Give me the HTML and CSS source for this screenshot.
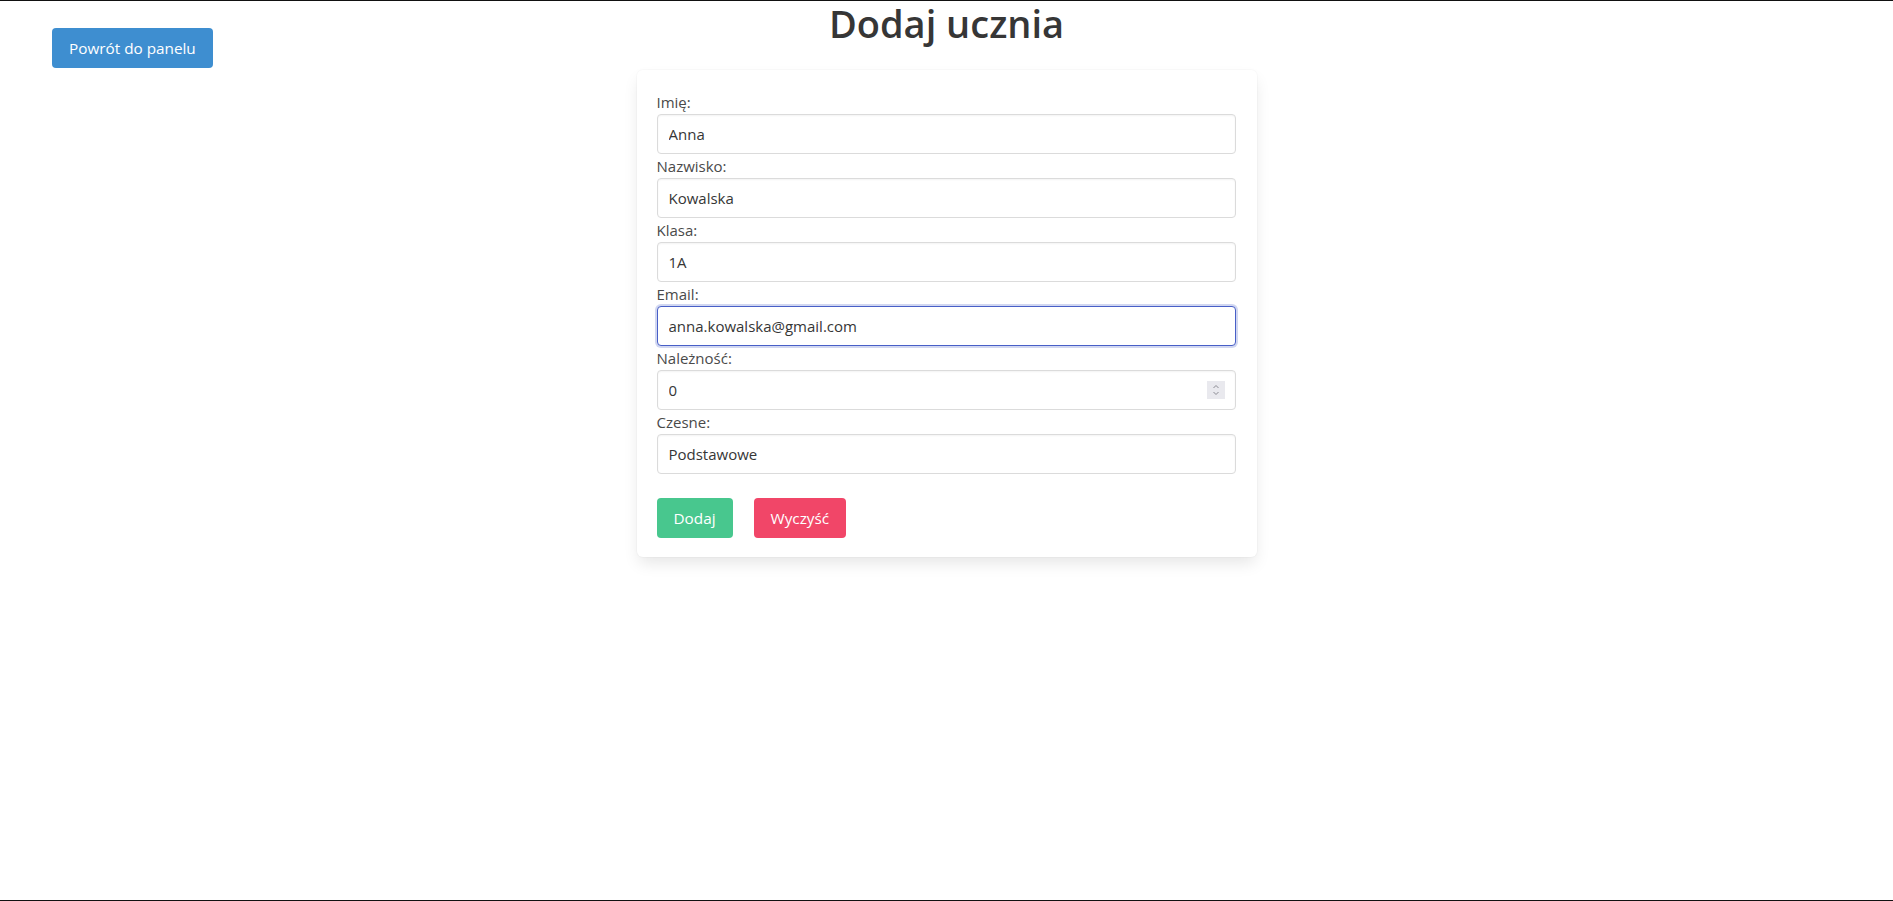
FILE: index.html
```html
<!DOCTYPE html>
<html lang="pl">
<head>
<meta charset="utf-8">
<title>Dodaj ucznia</title>
<link rel="stylesheet" href="styles.css">
</head>
<body>
<div class="page">
  <div class="side">
    <a class="btn btn-info back-btn" href="#">Powrót do panelu</a>
  </div>
  <main class="center">
    <h1 class="title">Dodaj ucznia</h1>
    <form class="box">
      <div class="field">
        <label class="label" for="imie">Imię:</label>
        <input class="input" id="imie" type="text" value="Anna">
      </div>
      <div class="field">
        <label class="label" for="nazwisko">Nazwisko:</label>
        <input class="input" id="nazwisko" type="text" value="Kowalska">
      </div>
      <div class="field">
        <label class="label" for="klasa">Klasa:</label>
        <input class="input" id="klasa" type="text" value="1A">
      </div>
      <div class="field">
        <label class="label" for="email">Email:</label>
        <input class="input is-focused" id="email" type="email" value="anna.kowalska@gmail.com">
      </div>
      <div class="field">
        <label class="label" for="naleznosc">Należność:</label>
        <div class="number-wrap">
          <input class="input input-number" id="naleznosc" type="number" value="0">
          <span class="spinner" aria-hidden="true">
            <svg width="18" height="18" viewBox="0 0 18 18">
              <rect width="18" height="18" fill="#e9e9ee"/>
              <path d="M6.5 7 L9 4.5 L11.5 7" fill="none" stroke="#8a8a92" stroke-width="1"/>
              <path d="M6.5 11 L9 13.5 L11.5 11" fill="none" stroke="#8a8a92" stroke-width="1"/>
            </svg>
          </span>
        </div>
      </div>
      <div class="field">
        <label class="label" for="czesne">Czesne:</label>
        <input class="input" id="czesne" type="text" value="Podstawowe">
      </div>
      <div class="actions">
        <button type="submit" class="btn btn-success">Dodaj</button>
        <button type="reset" class="btn btn-danger">Wyczyść</button>
      </div>
    </form>
  </main>
  <div class="side"></div>
</div>
</body>
</html>
```

FILE: styles.css
```css
* {
  box-sizing: border-box;
}

html {
  height: 100%;
}

body {
  margin: 0;
  min-height: 100vh;
  border-top: 1px solid #111;
  border-bottom: 1px solid #111;
  background: #fff;
  color: #4a4a4a;
  font-family: "Open Sans", "Noto Sans", "Liberation Sans", sans-serif;
  font-size: 15px;
  line-height: 1.6;
}

.page {
  display: grid;
  grid-template-columns: 1fr 620px 1fr;
}

.side {
  display: flex;
  align-items: flex-start;
}

.back-btn {
  margin-top: 27px;
  margin-left: 52px;
}

.title {
  margin: 0 0 24px;
  text-align: center;
  font-size: 38px;
  font-weight: 600;
  line-height: 45px;
  color: #363636;
}

.box {
  background: #fff;
  border-radius: 6px;
  padding: 20px 21px 19px 20px;
  box-shadow: 0 8px 16px -2px rgba(10, 10, 10, 0.1), 0 0 0 1px rgba(10, 10, 10, 0.02);
  display: flex;
  flex-direction: column;
}

.field {
  display: flex;
  flex-direction: column;
}

.label {
  display: block;
  height: 24px;
  line-height: 24px;
  color: #4a4a4a;
}

.input {
  display: block;
  width: 100%;
  height: 40px;
  padding: 0 11px;
  border: 1px solid #dbdbdb;
  border-radius: 4px;
  background: #fff;
  color: #363636;
  font: inherit;
  font-size: 15px;
  box-shadow: inset 0 1px 2px rgba(10, 10, 10, 0.05);
  outline: none;
}

.input.is-focused {
  border-color: #485fc7;
  box-shadow: 0 0 0 2px rgba(72, 95, 199, 0.25);
}

.number-wrap {
  position: relative;
}

.input-number {
  appearance: textfield;
  -moz-appearance: textfield;
}

.input-number::-webkit-inner-spin-button,
.input-number::-webkit-outer-spin-button {
  -webkit-appearance: none;
  margin: 0;
}

.spinner {
  position: absolute;
  right: 11px;
  top: 11px;
  width: 18px;
  height: 18px;
  display: block;
  line-height: 0;
}

.actions {
  display: flex;
  gap: 21px;
  margin-top: 24px;
}

.btn {
  display: inline-flex;
  align-items: center;
  justify-content: center;
  height: 40px;
  padding: 0 16px;
  border: 1px solid transparent;
  border-radius: 4px;
  color: #fff;
  font: inherit;
  font-size: 15.3px;
  text-decoration: none;
  cursor: pointer;
  white-space: nowrap;
}

.btn-info {
  background: #3e8ed0;
}

.btn-success {
  background: #48c78e;
}

.btn-danger {
  background: #f14668;
}
```
